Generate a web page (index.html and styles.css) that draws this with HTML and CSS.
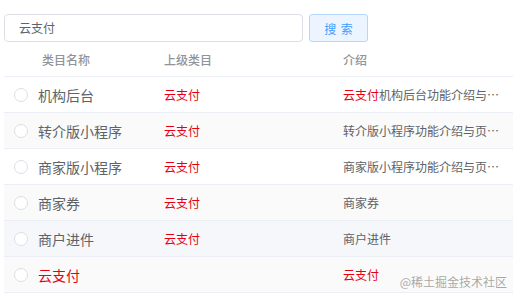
FILE: index.html
```html
<!DOCTYPE html>
<html lang="zh-CN">
<head>
    <meta charset="UTF-8">
    <meta name="viewport" content="width=device-width, initial-scale=1.0">
    <title>类目列表</title>
    <link rel="stylesheet" href="styles.css">
</head>
<body>
    <div class="search-bar">
        <div class="search-input">云支付</div>
        <button class="search-btn">搜 索</button>
    </div>

    <div class="table">
        <div class="row head">
            <div class="cell name-head">类目名称</div>
            <div class="cell">上级类目</div>
            <div class="cell">介绍</div>
        </div>
        <!-- rows -->
        <div class="row">
            <div class="cell name"><span class="radio"></span>机构后台</div>
            <div class="cell red small">云支付</div>
            <div class="cell small intro"><span class="red">云支付</span>机构后台功能介绍与页面说明</div>
        </div>
        <div class="row striped">
            <div class="cell name"><span class="radio"></span>转介版小程序</div>
            <div class="cell red small">云支付</div>
            <div class="cell small intro">转介版小程序功能介绍与页面说明</div>
        </div>
        <div class="row">
            <div class="cell name"><span class="radio"></span>商家版小程序</div>
            <div class="cell red small">云支付</div>
            <div class="cell small intro">商家版小程序功能介绍与页面说明</div>
        </div>
        <div class="row striped">
            <div class="cell name"><span class="radio"></span>商家券</div>
            <div class="cell red small">云支付</div>
            <div class="cell small intro">商家券</div>
        </div>
        <div class="row hover">
            <div class="cell name"><span class="radio"></span>商户进件</div>
            <div class="cell red small">云支付</div>
            <div class="cell small intro">商户进件</div>
        </div>
        <div class="row striped">
            <div class="cell name red"><span class="radio"></span>云支付</div>
            <div class="cell small"></div>
            <div class="cell small intro red">云支付</div>
        </div>
        <div class="watermark">@稀土掘金技术社区</div>
    </div>
</body>
</html>
```

FILE: styles.css
```css
* {
    box-sizing: border-box;
}

body {
    margin: 0;
    padding: 14px 5px 0 4px;
    font-family: "Noto Sans CJK SC", "Liberation Sans", sans-serif;
    color: #606266;
    background: #fff;
}

.search-bar {
    display: flex;
    gap: 6px;
}

.search-input {
    width: 299px;
    height: 28px;
    border: 1px solid #dcdfe6;
    border-radius: 4px;
    padding: 0 14px;
    font-size: 12px;
    line-height: 26px;
    color: #606266;
}

.search-btn {
    width: 59px;
    height: 28px;
    border: 1px solid #b3d8ff;
    border-radius: 3px;
    background: #ecf5ff;
    color: #409eff;
    font-family: inherit;
    font-size: 12px;
    word-spacing: 2px;
    padding: 0;
}

.table {
    position: relative;
    width: 509px;
}

.row {
    display: grid;
    grid-template-columns: 150px 179px 180px;
    height: 36px;
    align-items: center;
    border-bottom: 1px solid #ebeef5;
}

.row.head {
    height: 35px;
    font-size: 12px;
    font-weight: 500;
    color: #909399;
}

.row.striped {
    background: #fafafa;
}

.row.hover {
    background: #f5f7fa;
}

.cell {
    padding: 0 10px;
    white-space: nowrap;
    overflow: hidden;
}

.name-head {
    padding-left: 38px;
}

.name {
    display: flex;
    align-items: center;
    gap: 10px;
    font-size: 14px;
}

.small {
    font-size: 12px;
}

.intro {
    text-overflow: ellipsis;
}

.red {
    color: #e60012;
}

.radio {
    width: 14px;
    height: 14px;
    border: 1px solid #dcdfe6;
    border-radius: 50%;
    background: #fff;
    flex: none;
}

.watermark {
    position: absolute;
    right: 6px;
    bottom: 3px;
    font-size: 12px;
    color: rgba(140, 140, 140, 0.75);
}
```
